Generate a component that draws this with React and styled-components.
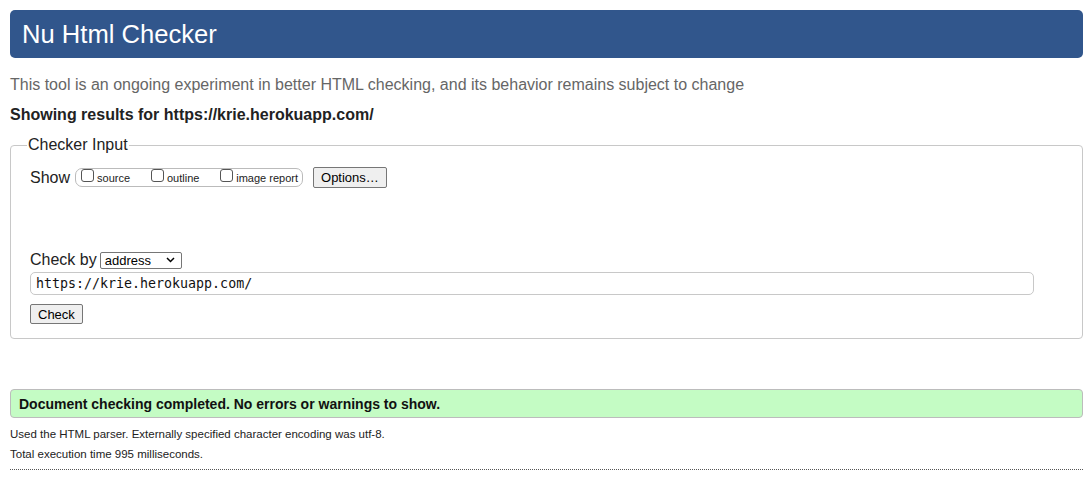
import React from "react";
import styled, { createGlobalStyle } from "styled-components";

const Global = createGlobalStyle`
  html, body { margin: 0; padding: 0; background: #fff; }
  body { font-family: "Liberation Sans", Arial, sans-serif; color: #222; }
`;

const Page = styled.div`
  padding: 10px 9px 0 10px;
`;

const Header = styled.h1`
  margin: 0;
  height: 48px;
  display: flex;
  align-items: center;
  padding: 0 12px;
  background: #31568c;
  color: #fff;
  border-radius: 5px;
  font-size: 25.6px;
  font-weight: normal;
`;

const Intro = styled.p`
  margin: 18px 0 0 0;
  font-size: 16px;
  line-height: 18px;
  color: #666;
`;

const Showing = styled.p`
  margin: 12px 0 0 0;
  font-size: 16px;
  line-height: 18px;
  font-weight: bold;
  color: #222;
`;

const Fieldset = styled.fieldset`
  margin: 12px 0 0 0;
  padding: 4px 19px 14px 19px;
  border: 1px solid #c8c8c8;
  border-radius: 4px;
  min-width: 0;
`;

const Legend = styled.legend`
  margin-left: -3px;
  padding: 0 1px;
  font-size: 16px;
  line-height: 18px;
  color: #222;
`;

const Row = styled.div`
  display: flex;
  align-items: center;
  font-size: 16px;
  margin-top: ${(p) => p.$mt || 0}px;
`;

const Label = styled.span`
  font-size: 16px;
  color: #222;
  margin-right: ${(p) => p.$mr || 4}px;
`;

const Group = styled.span`
  display: inline-flex;
  align-items: center;
  height: 17px;
  padding: 0 4px 0 5px;
  border: 1px solid #bbb;
  border-radius: 7px;
  margin-right: 10px;
  width: 217px;
  justify-content: space-between;
`;

const Opt = styled.label`
  display: inline-flex;
  align-items: center;
  font-size: 11px;
  color: #222;
`;

const Box = styled.span`
  display: inline-block;
  width: 11px;
  height: 11px;
  border: 1px solid #555;
  border-radius: 3px;
  margin-right: 3px;
  position: relative;
  top: -2px;
  background: #fff;
`;

const Button = styled.button`
  font-family: "Liberation Sans", Arial, sans-serif;
  font-size: 13px;
  height: ${(p) => p.$h || 21}px;
  padding: 0 ${(p) => p.$px || 7}px;
  background: #efefef;
  border: 1px solid #767676;
  border-radius: 2px;
  color: #000;
  line-height: 1;
`;

const Select = styled.span`
  display: inline-flex;
  align-items: center;
  justify-content: space-between;
  width: 82px;
  height: 17px;
  box-sizing: border-box;
  border: 1px solid #767676;
  border-radius: 2px;
  padding: 0 6px 0 4px;
  font-size: 13px;
  color: #000;
  background: #fff;
`;

const Input = styled.div`
  margin-top: 3px;
  width: 1004px;
  height: 23px;
  box-sizing: border-box;
  border: 1px solid #c8c8c8;
  border-radius: 5px;
  display: flex;
  align-items: center;
  padding-left: 5px;
  font-family: "DejaVu Sans Mono", "Liberation Mono", monospace;
  font-size: 13.3px;
  color: #111;
`;

const Success = styled.div`
  margin-top: 50px;
  height: 29px;
  box-sizing: border-box;
  background: #c4fcc4;
  border: 1px solid #bcbcbc;
  border-radius: 4px;
  display: flex;
  align-items: center;
  padding-left: 8px;
  font-size: 14px;
  font-weight: bold;
  color: #111;
`;

const Note = styled.p`
  margin: ${(p) => p.$mt || 0}px 0 0 0;
  font-size: 11.5px;
  line-height: 14px;
  color: #222;
`;

const Rule = styled.hr`
  margin: 8px 0 0 0;
  border: 0;
  border-top: 1px dotted #555;
  height: 0;
`;

function Chevron() {
  return (
    <svg width="9" height="6" viewBox="0 0 9 6">
      <path d="M1 1 L4.5 4.5 L8 1" stroke="#000" strokeWidth="1.5" fill="none" />
    </svg>
  );
}

export default function App() {
  return (
    <>
      <Global />
      <Page>
        <Header>Nu Html Checker</Header>
        <Intro>This tool is an ongoing experiment in better HTML checking, and its behavior remains subject to change</Intro>
        <Showing>Showing results for https://krie.herokuapp.com/</Showing>
        <Fieldset>
          <Legend>Checker Input</Legend>
          <Row $mt={9}>
            <Label $mr={5}>Show</Label>
            <Group>
              <Opt><Box />source</Opt>
              <Opt><Box />outline</Opt>
              <Opt><Box />image report</Opt>
            </Group>
            <Button>Options…</Button>
          </Row>
          <Row $mt={63}>
            <Label $mr={3}>Check by</Label>
            <Select>address<Chevron /></Select>
          </Row>
          <Input>https://krie.herokuapp.com/</Input>
          <Row $mt={9}>
            <Button $h={20} $px={7}>Check</Button>
          </Row>
        </Fieldset>
        <Success>Document checking completed. No errors or warnings to show.</Success>
        <Note $mt={9}>Used the HTML parser. Externally specified character encoding was utf-8.</Note>
        <Note $mt={6}>Total execution time 995 milliseconds.</Note>
        <Rule />
      </Page>
    </>
  );
}
